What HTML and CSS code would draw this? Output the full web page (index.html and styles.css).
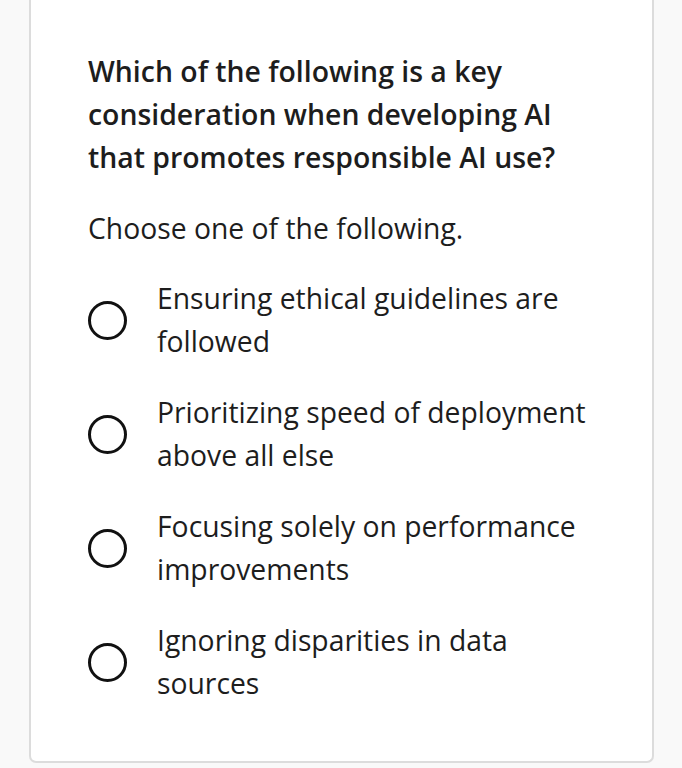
FILE: index.html
```html
<!DOCTYPE html>
<html lang="en">
<head>
<meta charset="utf-8">
<title>Question</title>
<link rel="stylesheet" href="styles.css">
</head>
<body>
<div class="card">
  <h2 class="question">Which of the following is a key consideration when developing AI that promotes responsible AI use?</h2>
  <p class="hint">Choose one of the following.</p>
  <ul class="options">
    <li class="option"><span class="radio"></span><span class="label">Ensuring ethical guidelines are followed</span></li>
    <li class="option"><span class="radio"></span><span class="label">Prioritizing speed of deployment above all else</span></li>
    <li class="option"><span class="radio"></span><span class="label">Focusing solely on performance improvements</span></li>
    <li class="option"><span class="radio"></span><span class="label">Ignoring disparities in data sources</span></li>
  </ul>
</div>
</body>
</html>
```
FILE: styles.css
```css
html, body {
  margin: 0;
  padding: 0;
  background: #f9f9f9;
}
body {
  font-family: "Open Sans", "Noto Sans", sans-serif;
  color: #1d1d1d;
  height: 768px;
  overflow: hidden;
}
.card {
  margin: -10px 28px 0 29px;
  background: #ffffff;
  border: 2px solid #dcdcdc;
  border-top: none;
  border-radius: 0 0 7px 7px;
  padding: 60px 40px 56px 57px;
}
.question {
  margin: 0;
  font-size: 28.4px;
  font-weight: 600;
  line-height: 43px;
  width: 480px;
}
.hint {
  margin: 28px 0 0;
  font-size: 28.3px;
  font-weight: 400;
  line-height: 43px;
}
.options {
  list-style: none;
  margin: 27px 0 0;
  padding: 0;
  display: flex;
  flex-direction: column;
  gap: 28px;
}
.option {
  display: flex;
  align-items: center;
}
.radio {
  flex: none;
  width: 33px;
  height: 33px;
  border: 3px solid #111;
  border-radius: 50%;
  margin-right: 30px;
}
.label {
  font-size: 28.3px;
  line-height: 43px;
  width: 440px;
}
```
